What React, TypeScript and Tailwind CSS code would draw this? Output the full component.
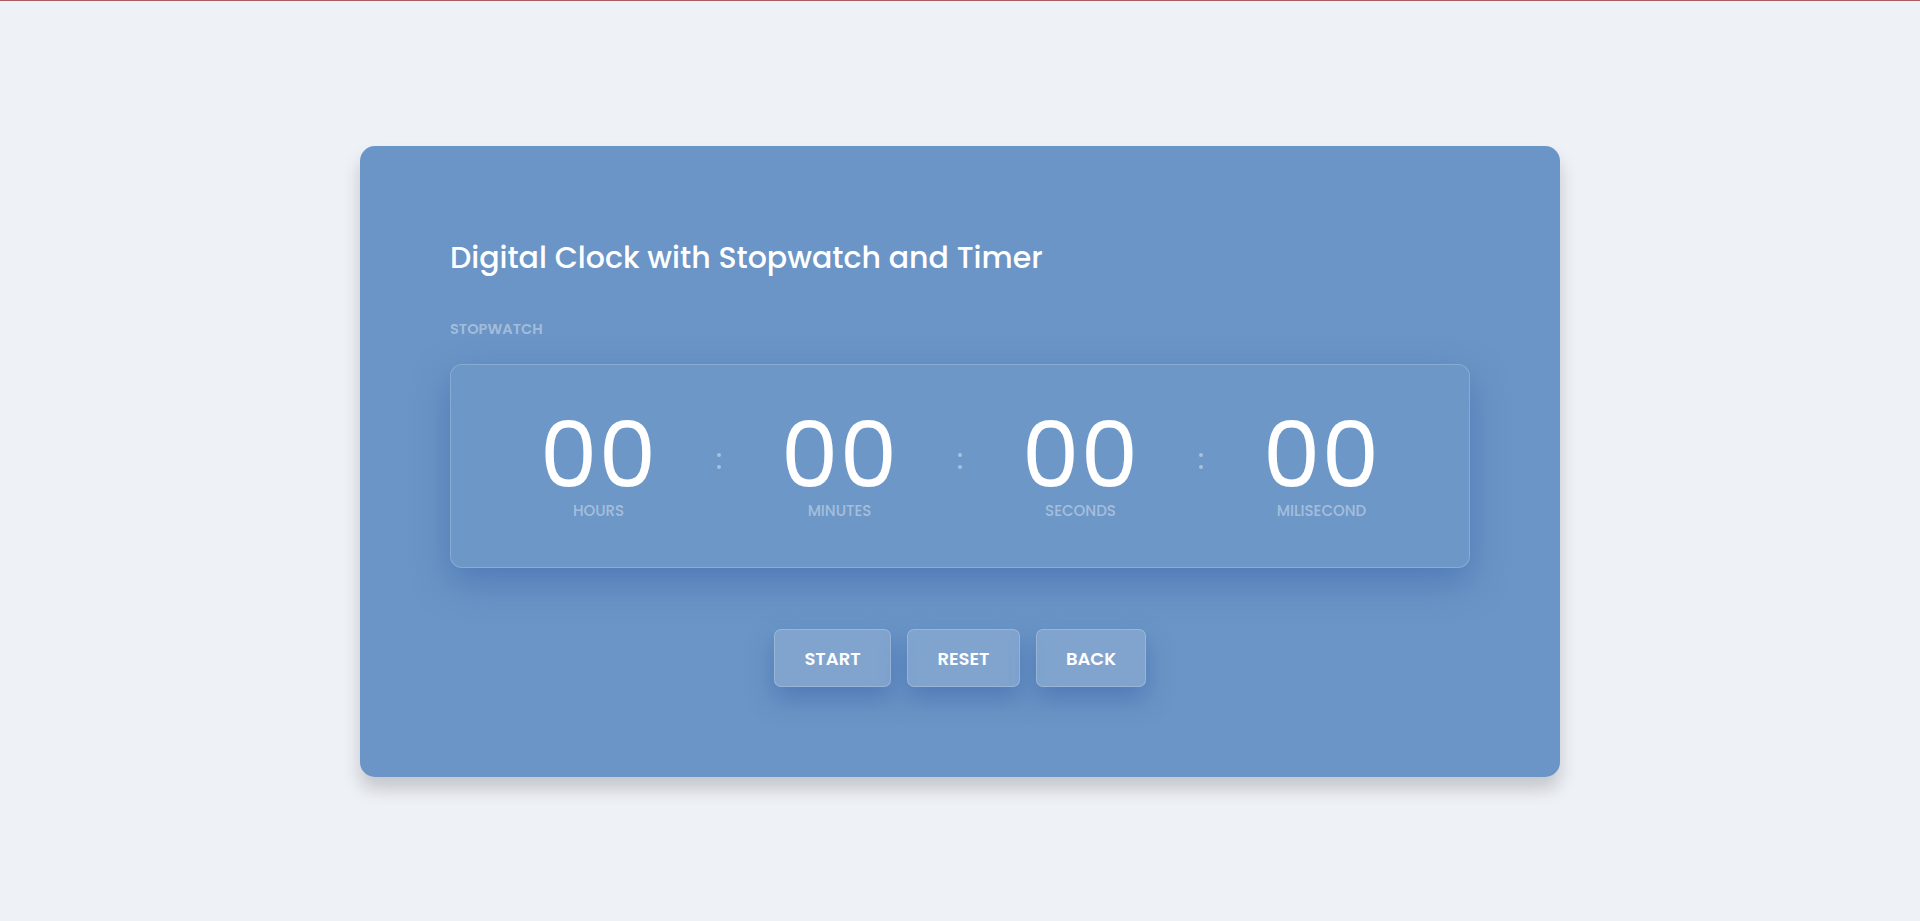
import React from 'react';

const units = [
  { value: '00', label: 'HOURS' },
  { value: '00', label: 'MINUTES' },
  { value: '00', label: 'SECONDS' },
  { value: '00', label: 'MILISECOND' },
];

function Colon() {
  return (
    <div className="flex w-[81px] flex-col items-center gap-[8px] pb-[10px]">
      <span className="h-[4px] w-[4px] rounded-full bg-white/40" />
      <span className="h-[4px] w-[4px] rounded-full bg-white/40" />
    </div>
  );
}

export default function App() {
  return (
    <div className="min-h-[921px] border-t border-[#a85c63] bg-[#eef1f6] font-['Poppins','Inter','Noto_Sans',sans-serif]">
      <div className="flex justify-center pt-[145px]">
        {/* Main card */}
        <div className="w-[1200px] rounded-[15px] bg-[#6a95c6] p-[90px] shadow-[0_12px_18px_rgba(0,0,0,0.18)]">
          <h1 className="text-[30px] font-medium leading-[44px] text-white">
            Digital Clock with Stopwatch and Timer
          </h1>
          <p className="mt-[39px] text-[14.5px] font-semibold leading-[21px] text-white/40">STOPWATCH</p>

          {/* Stopwatch display */}
          <div className="mt-[24px] flex h-[204px] items-center justify-center rounded-[12px] border border-white/20 bg-white/[0.02] shadow-[0_14px_34px_rgba(60,100,170,0.55)]">
            {units.map((u, i) => (
              <React.Fragment key={u.label}>
                {i > 0 && <Colon />}
                <div className="flex w-[160px] flex-col items-center">
                  <span className="text-[92px] font-normal leading-[86px] tracking-[1px] text-white">{u.value}</span>
                  <span className="mt-[3px] text-[15px] font-medium leading-[20px] text-white/40">{u.label}</span>
                </div>
              </React.Fragment>
            ))}
          </div>

          {/* Controls */}
          <div className="mt-[61px] flex justify-center gap-[16px]">
            <button className="h-[58px] w-[117px] rounded-[7px] border border-white/20 bg-white/[0.15] text-[18px] font-semibold text-white shadow-[0_12px_24px_rgba(60,100,170,0.55)]">
              START
            </button>
            <button className="h-[58px] w-[113px] rounded-[7px] border border-white/20 bg-white/[0.15] text-[18px] font-semibold text-white shadow-[0_12px_24px_rgba(60,100,170,0.55)]">
              RESET
            </button>
            <button className="h-[58px] w-[110px] rounded-[7px] border border-white/20 bg-white/[0.15] text-[18px] font-semibold text-white shadow-[0_12px_24px_rgba(60,100,170,0.55)]">
              BACK
            </button>
          </div>
        </div>
      </div>
    </div>
  );
}
